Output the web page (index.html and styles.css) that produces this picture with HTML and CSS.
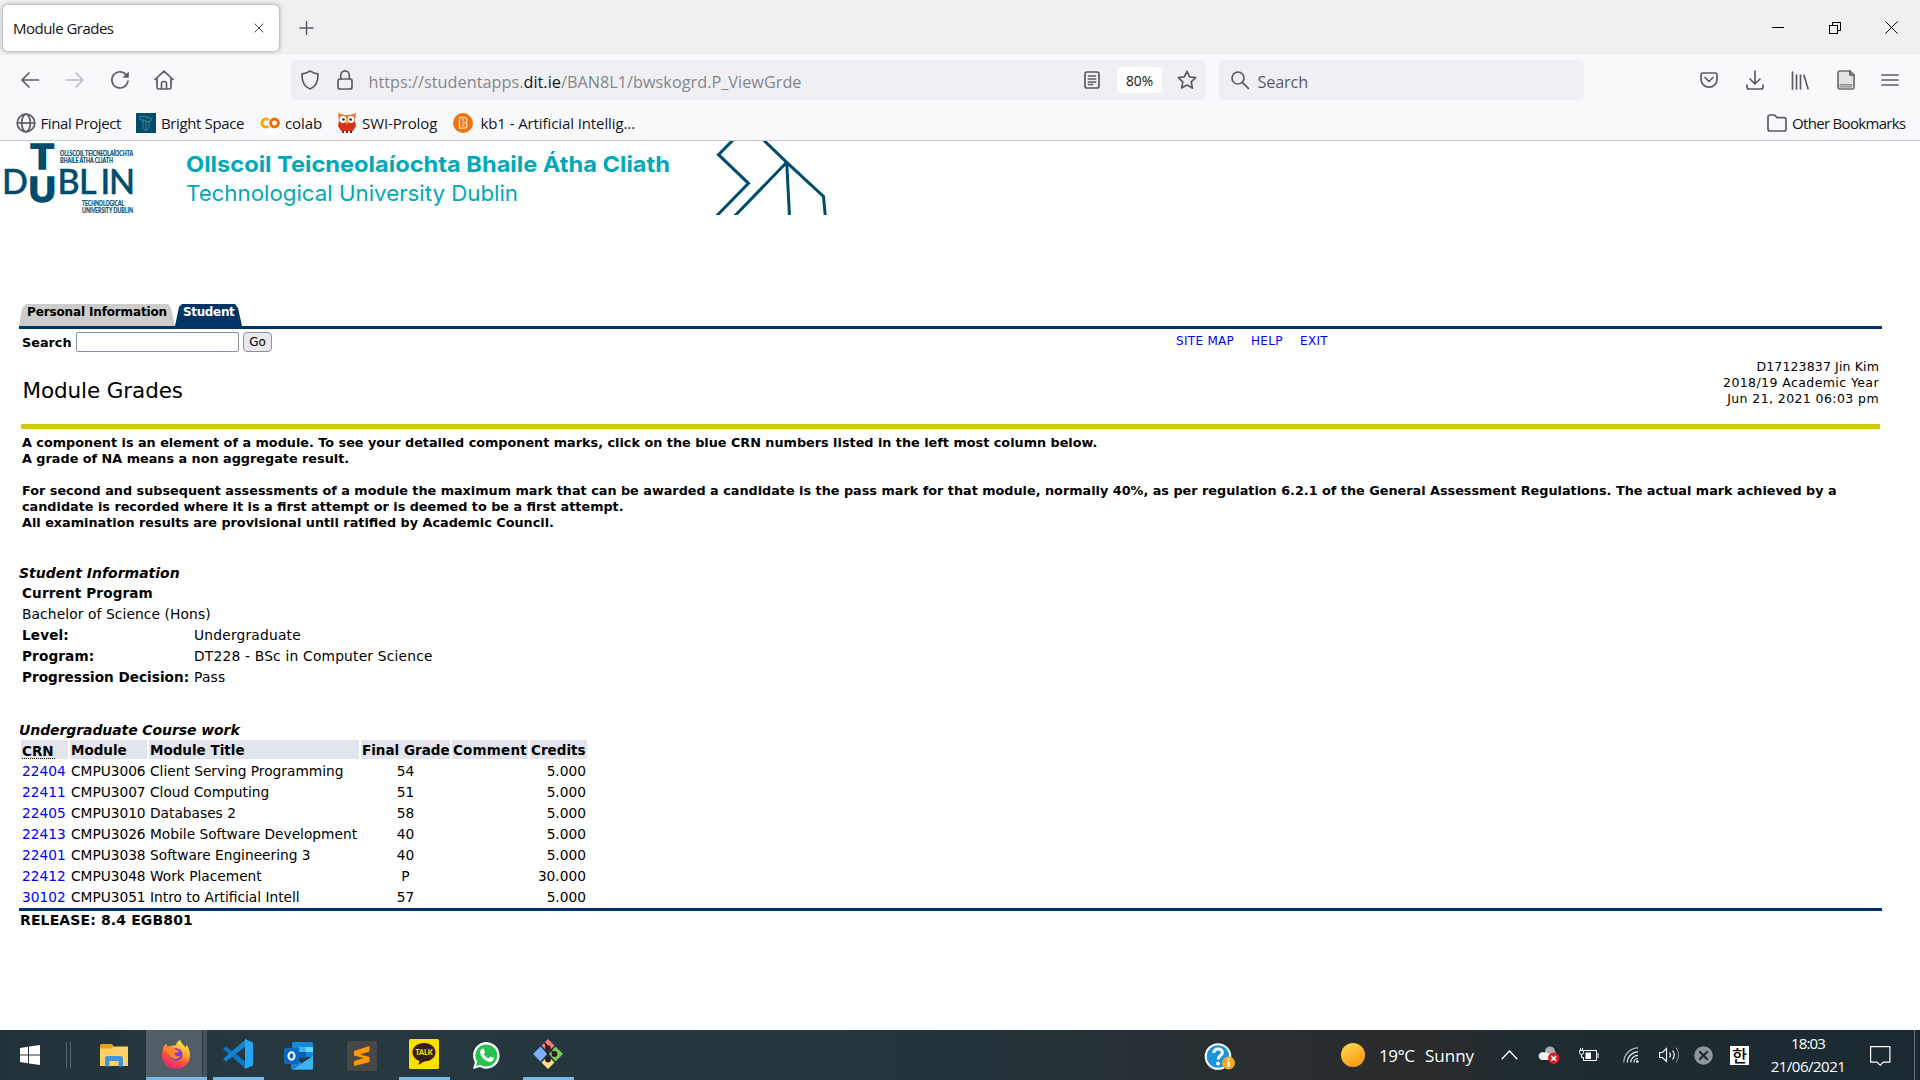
FILE: index.html
```html
<!DOCTYPE html>
<html lang="en">
<head>
<meta charset="utf-8">
<title>Module Grades</title>
<link rel="stylesheet" href="styles.css">
</head>
<body>
<div class="screen">
  <header class="tabstrip">
    <div class="tab"><span class="tab-title">Module Grades</span>
      <svg class="tab-close" viewBox="0 0 10 10"><path d="M.7.7l8.600 8.600M9.300.7L.7 9.300"/></svg></div>
    <svg class="new-tab" viewBox="0 0 14 14"><path d="M7 0v14M0 7h14"/></svg>
    <div class="window-buttons">
      <svg class="win-min" viewBox="0 0 12 12"><path d="M0 5.500h12"/></svg>
      <svg class="win-restore" viewBox="0 0 12 12"><path d="M.5 3.500h8v8h-8zM3.500 3.500v-3h8v8h-3"/></svg>
      <svg class="win-close" viewBox="0 0 13 13"><path d="M.5.500l12 12M12.500.500l-12 12"/></svg>
    </div>
  </header>

  <nav class="navbar">
    <svg class="nav-icon back" viewBox="0 0 18 16"><path d="M17.500 8H1M8 1L1 8l7 7"/></svg>
    <svg class="nav-icon forward" viewBox="0 0 18 16"><path d="M.5 8H17M10 1l7 7-7 7"/></svg>
    <svg class="nav-icon reload" viewBox="0 0 18 18"><path d="M15.800 4.500A8.100 8.100 0 1 0 17 10"/><path class="solid" d="M17.800.5v6.300h-6.300z"/></svg>
    <svg class="nav-icon home" viewBox="0 0 20 20"><path d="M1 9.500L10 1.200l9 8.300M3 8v9.500a1.500 1.500 0 0 0 1.500 1.500h11a1.500 1.500 0 0 0 1.500-1.500V8M7.500 19v-5.500a2 2 0 0 1 2-2h1a2 2 0 0 1 2 2V19"/></svg>
    <div class="urlbar">
      <svg class="shield" viewBox="0 0 18 20"><path d="M9 1c2.500 1.600 5 2.600 8 2.900C17.300 11 14.500 17 9 19 3.500 17 .7 11 1 3.900 4 3.600 6.500 2.600 9 1z"/></svg>
      <svg class="lock" viewBox="0 0 16 20"><rect x="1" y="9" width="14" height="10" rx="2"/><path d="M3.700 9V5.200a4.300 4.300 0 0 1 8.600 0V9"/></svg>
      <span class="url">https://studentapps.<b>dit.ie</b>/BAN8L1/bwskogrd.P_ViewGrde</span>
      <svg class="reader" viewBox="0 0 16 18"><rect x="1" y="1" width="14" height="16" rx="2"/><path d="M4.500 5h7M4.500 8h7M4.500 11h7M4.500 13.500h4"/></svg>
      <span class="zoom-level">80%</span>
      <svg class="star" viewBox="0 0 20 20"><path d="M10 1.300l2.600 5.600 6.100.8-4.500 4.200 1.200 6.200L10 15.100l-5.400 3 1.200-6.200L1.300 7.700l6.100-.8z"/></svg>
    </div>
    <div class="searchbar">
      <svg class="magnifier" viewBox="0 0 18 18"><circle cx="7" cy="7" r="6"/><path d="M11.300 11.300L17.300 17.300"/></svg>
      <span>Search</span>
    </div>
    <div class="toolbar-actions">
      <svg class="pocket" viewBox="0 0 18 16"><path d="M2.800 1h12.400A1.800 1.800 0 0 1 17 2.800V7.200a8 8 0 0 1-16 0V2.800A1.800 1.800 0 0 1 2.800 1zM5 5.500l4 4 4-4"/></svg>
      <svg class="download" viewBox="0 0 18 19"><path d="M9 0v13M4 8l5 5 5-5M1 14v2a2 2 0 0 0 2 2h12a2 2 0 0 0 2-2v-2"/></svg>
      <svg class="library" viewBox="0 0 18 19"><path d="M1.500 1v17M5.500 4v14M9.500 4v14M13 4.200l4 13.600"/></svg>
      <svg class="page" viewBox="0 0 18 20"><path class="sheet" d="M2.500 1H13l4 4v12.500A1.500 1.500 0 0 1 15.500 19h-13A1.500 1.500 0 0 1 1 17.500v-15A1.500 1.500 0 0 1 2.500 1z"/><path d="M13 1v4h4"/><path class="bar" d="M3.500 14.500h11v2.500h-11z"/></svg>
      <svg class="menu" viewBox="0 0 16 14"><path d="M0 2h16M0 7h16M0 12h16"/></svg>
    </div>
  </nav>

  <div class="bookmarks">
    <svg class="bm-icon" viewBox="0 0 20 20"><g class="globe"><circle cx="10" cy="10" r="8.800"/><ellipse cx="10" cy="10" rx="4.300" ry="8.800"/><path d="M1.500 10h17"/></g></svg>
    <span class="bm bm-final">Final Project</span>
    <svg class="bm-icon" viewBox="0 0 20 20"><path fill="#004c6c" d="M0 0h20v20H0z"/><path fill="none" stroke="#4b94a8" stroke-width=".8" d="M4 3.500h6l2 2M4 3.500v3l3 1v8l3 2v-9h3l3-2-3-2h-3M10 8.500l-3-2M13 8.500v6l-3 3"/></svg>
    <span class="bm bm-bright">Bright Space</span>
    <svg class="bm-icon" viewBox="0 0 20 20"><circle cx="10" cy="10" r="10" fill="#fff"/><path fill="none" stroke="#f9ab00" stroke-width="3" d="M8.500 7A4 4 0 1 0 8.500 13"/><circle cx="14.500" cy="10" r="3.900" fill="none" stroke="#e8710a" stroke-width="3"/></svg>
    <span class="bm bm-colab">colab</span>
    <svg class="bm-icon" viewBox="0 0 20 20"><path fill="#d6301f" d="M2 8h16l1 5-3 5H4l-3-5z"/><path fill="#e9772a" d="M1 0l6 2h6l6-2-1 9H2z"/><circle cx="6" cy="6.500" r="3.400" fill="#fff"/><circle cx="14" cy="6.500" r="3.400" fill="#fff"/><circle cx="6.500" cy="6.500" r="1.300" fill="#222"/><circle cx="13.500" cy="6.500" r="1.300" fill="#222"/><path fill="#f8c22c" d="M8.500 8h3L10 12z"/><path fill="#7b1610" d="M5 18h2v2H5zM9 18h2v2H9zM13 18h2v2h-2z"/></svg>
    <span class="bm bm-swi">SWI-Prolog</span>
    <svg class="bm-icon" viewBox="0 0 20 20"><circle cx="10" cy="10" r="10" fill="#ee7410"/><path fill="none" stroke="#fbd9b5" stroke-width="1.300" d="M6.500 4.500h4.800a2.600 2.600 0 0 1 1 5 2.900 2.900 0 0 1-1 5.600H6.500zM9 7h2M9 9.800h2.500M9 12.500h2.500"/></svg>
    <span class="bm bm-kb">kb1 - Artificial Intellig...</span>
    <svg class="bm-icon folder" viewBox="0 0 20 20"><path d="M3 2h4.500l2.500 2.700h7a2 2 0 0 1 2 2V16a2 2 0 0 1-2 2H3a2 2 0 0 1-2-2V4a2 2 0 0 1 2-2z"/></svg>
    <span class="bm bm-other">Other Bookmarks</span>
  </div>

  <main class="page-body">
    <svg class="banner" viewBox="0 0 840 74">
      <g class="logo">
        <text class="logo-heavy" x="30.500" y="27.500" textLength="23.500" lengthAdjust="spacingAndGlyphs">T</text>
        <text class="logo-heavy" x="28.500" y="60.500" textLength="27.500" lengthAdjust="spacingAndGlyphs">U</text>
        <text class="logo-letter" x="2" y="53">D</text>
        <text class="logo-letter" x="57.500 79 100.500 109" y="53">BLIN</text>
        <text class="logo-small" x="60" y="14.500" textLength="73" lengthAdjust="spacingAndGlyphs">OLLSCOIL TEICNEOLAÍOCHTA</text>
        <text class="logo-small" x="60" y="21.500" textLength="53" lengthAdjust="spacingAndGlyphs">BHAILE ÁTHA CLIATH</text>
        <text class="logo-small" x="82" y="65" textLength="42" lengthAdjust="spacingAndGlyphs">TECHNOLOGICAL</text>
        <text class="logo-small" x="82" y="71.700" textLength="51" lengthAdjust="spacingAndGlyphs">UNIVERSITY DUBLIN</text>
      </g>
      <text class="name-irish" x="186" y="31" textLength="484" lengthAdjust="spacingAndGlyphs">Ollscoil Teicneolaíochta Bhaile Átha Cliath</text>
      <text class="name-english" x="186" y="60" textLength="332" lengthAdjust="spacingAndGlyphs">Technological University Dublin</text>
      <path class="bridge" d="M733.500-1.500L718.500 13.700 748.500 42.300 716.500 75M763-1.500L786.700 21.300 823.500 55.500 825.300 75M786.700 21.300L734.700 75M786.700 21.300L789.500 75"/>
    </svg>

    <div class="portal">
      <div class="portal-tabs">
        <div class="ptab ptab-info">Personal Information</div>
        <div class="ptab ptab-student">Student</div>
      </div>
      <form class="search-row">
        <label for="q">Search</label>
        <input id="q" type="text">
        <button type="button">Go</button>
        <div class="site-links"><a class="site-map">SITE MAP</a><a class="help-link">HELP</a><a>EXIT</a></div>
      </form>
      <div class="title-row">
        <h1>Module Grades</h1>
        <div class="user-info"><div class="user-name">D17123837 Jin Kim</div><div>2018/19 Academic Year</div><div>Jun 21, 2021 06:03 pm</div></div>
      </div>
      <div class="notice">
        <span>A component is an element of a module. To see your detailed component marks, click on the blue CRN numbers listed in the left most column below.</span><br>
        <span>A grade of NA means a non aggregate result.</span><br><br>
        <span>For second and subsequent assessments of a module the maximum mark that can be awarded a candidate is the pass mark for that module, normally 40%, as per regulation 6.2.1 of the General Assessment Regulations. The actual mark achieved by a</span><br>
        <span>candidate is recorded where it is a first attempt or is deemed to be a first attempt.</span><br>
        <span>All examination results are provisional until ratified by Academic Council.</span>
      </div>
      <h2 class="caption">Student Information</h2>
      <div class="info">
        <div class="info-row"><b>Current Program</b></div>
        <div class="info-row"><span class="degree">Bachelor of Science (Hons)</span></div>
        <div class="info-row"><b>Level:</b><span>Undergraduate</span></div>
        <div class="info-row"><b>Program:</b><span>DT228 - BSc in Computer Science</span></div>
        <div class="info-row"><b class="decision">Progression Decision:</b><span>Pass</span></div>
      </div>
      <h2 class="caption caption-work">Undergraduate Course work</h2>
      <table class="grades">
        <colgroup><col class="c-crn"><col class="c-module"><col class="c-title"><col class="c-grade"><col class="c-comment"><col class="c-credits"></colgroup>
        <tr><th><abbr>CRN</abbr></th><th>Module</th><th>Module Title</th><th>Final Grade</th><th class="th-comment">Comment</th><th>Credits</th></tr>
        <tr><td><a>22404</a></td><td>CMPU3006</td><td>Client Serving Programming</td><td>54</td><td></td><td>5.000</td></tr>
        <tr><td><a>22411</a></td><td>CMPU3007</td><td>Cloud Computing</td><td>51</td><td></td><td>5.000</td></tr>
        <tr><td><a>22405</a></td><td>CMPU3010</td><td>Databases 2</td><td>58</td><td></td><td>5.000</td></tr>
        <tr><td><a>22413</a></td><td>CMPU3026</td><td>Mobile Software Development</td><td>40</td><td></td><td>5.000</td></tr>
        <tr><td><a>22401</a></td><td>CMPU3038</td><td>Software Engineering 3</td><td>40</td><td></td><td>5.000</td></tr>
        <tr><td><a>22412</a></td><td>CMPU3048</td><td>Work Placement</td><td>P</td><td></td><td>30.000</td></tr>
        <tr><td><a>30102</a></td><td>CMPU3051</td><td>Intro to Artificial Intell</td><td>57</td><td></td><td>5.000</td></tr>
      </table>
      <div class="release">RELEASE: 8.4 EGB801</div>
    </div>
  </main>

  <footer class="taskbar">
    <div class="task start"><svg width="20" height="20" viewBox="0 0 20 20"><path fill="#fff" d="M0 3l8-1.200v7.700H0zM9 1.600L20 0v9.500H9zM0 10.500h8v7.700L0 17zM9 10.500h11V20L9 18.400z"/></svg></div>
    <i class="divider"></i>
    <div class="task explorer"><svg width="28" height="24" viewBox="0 0 28 24"><path fill="#e3a21a" d="M0 1.500A1.500 1.500 0 0 1 1.500 0H12l1.500 2-2 3H0z"/><path fill="#fdd165" d="M0 4.500h11l2-2h15V22H0z"/><path fill="#3f96dd" d="M5 22.500v-8A2.500 2.500 0 0 1 7.500 12h13a2.500 2.500 0 0 1 2.500 2.500v8h-4.500V17h-9v5.500z"/></svg></div>
    <div class="task firefox"><svg width="28" height="29" viewBox="0 0 28 29"><defs><linearGradient id="fx" x1=".8" y1="0" x2=".3" y2="1"><stop offset="0" stop-color="#fff44f"/><stop offset=".35" stop-color="#ffb02e"/><stop offset=".65" stop-color="#ff5140"/><stop offset="1" stop-color="#e0237d"/></linearGradient></defs><path fill="url(#fx)" d="M14 5c.5-2.500 2-4.300 4.500-5 .3 3.500 3.300 4.500 4.800 7.500l1-2.500C27 8 28 11.500 28 15.500a14 13.300 0 0 1-28 0C0 11 1.200 8 2 5.500L5 4v3.500C7 6 10 5.500 14 5z"/><path fill="#7a3be0" d="M9 10c3-2.500 8-2.500 10.500 1 2 4 .5 9-4.500 9.500-5 .3-7.500-3-7.500-6z"/><path fill="#ff8a2e" d="M2.500 8c3.500-2.500 8-2 11 1.500l4 1.500c-1 1.700-3 1.500-5 2.500.5 2.500 3 3.500 6 2.200-2 4-8 4.500-10.500.3C6.500 13 5 12 2.500 8z"/></svg></div>
    <div class="task vscode"><svg width="30" height="30" viewBox="0 0 30 30"><path fill="#0b76c5" d="M0 10l3-2.500L23 23v7z"/><path fill="#1184d4" d="M0 20l3 2.500L23 7V0z"/><path fill="#2aa5f2" d="M22 0l8 3.500v23L22 30z"/></svg></div>
    <div class="task outlook"><svg width="29" height="28" viewBox="0 0 29 28"><path fill="#1488dc" d="M8 1.500A1.500 1.500 0 0 1 9.500 0h18A1.500 1.500 0 0 1 29 1.500V15H8z"/><path fill="#35b8f1" d="M15 5h7v5h-7z"/><path fill="#62dcfa" d="M22 5h7v5h-7z"/><path fill="#0a62ad" d="M15 10h7v6h-7z"/><path fill="#1b7fd2" d="M7 14l11 7 11-7v12a1.500 1.500 0 0 1-1.500 1.500h-19A1.500 1.500 0 0 1 7 26z"/><path fill="#3eb4ec" d="M29 14v12a1.500 1.500 0 0 1-1.500 1.500H9z"/><rect y="6" width="15" height="16" rx="1.500" fill="#0a66c0"/><ellipse cx="7.500" cy="14" rx="3" ry="3.700" fill="none" stroke="#fff" stroke-width="2"/></svg></div>
    <div class="task sublime"><svg width="30" height="30" viewBox="0 0 30 30"><rect width="30" height="30" rx="2" fill="#484747"/><path fill="#ff9800" d="M7 10l15.500-5v5.500L13 13.500l9.500 2.500v5L7 25v-5l9.500-3L7 14.500z"/></svg></div>
    <div class="task kakao"><svg width="30" height="30" viewBox="0 0 30 30"><rect width="30" height="30" rx="1.500" fill="#fae100"/><path fill="#371d1e" d="M15 4c6.500 0 11.500 4 11.500 9.300S21.500 22.500 15 22.500L9.500 26l.8-4.200C6.300 20.500 3.500 17.300 3.500 13.300 3.500 8 8.500 4 15 4z"/><text class="talk" x="6.300" y="16.300" textLength="17.400" lengthAdjust="spacingAndGlyphs">TALK</text></svg></div>
    <div class="task whatsapp"><svg width="27" height="27" viewBox="0 0 27 27"><path fill="#fff" d="M0 27l1.900-6.800A13.300 13.300 0 1 1 7 25.100z"/><path fill="#27c24c" d="M3 24l1.200-4.300a11 11 0 1 1 3.200 3.100z"/><path fill="#fff" d="M8.500 7c1-1 2-.7 2.400.2l1 2.500c.2.700-.4 1.200-1.200 2.200 1.200 2.200 2.900 3.600 5 4.500l1.700-2c1.300.3 2.500 1 3.500 1.700 0 3.500-3.200 4.300-5.200 3.600C12 18.500 8.500 15.500 7.200 11.500c-.5-1.700.2-3.500 1.300-4.500z"/></svg></div>
    <div class="task git"><svg width="30" height="30" viewBox="0 0 30 30"><path fill="#f87c7c" d="M15 0l6.500 6.500L15 13 8.500 6.500z"/><path fill="#7fb0fb" d="M7.500 7.500L14 15l-6.500 7.500L0 15z"/><path fill="#7cc95c" d="M22.500 7.500L30 15l-7.500 7.500L16 15z"/><path fill="#ffe27f" d="M15 17l6.500 6.500L15 30l-6.500-6.500z"/><g class="git-graph"><path d="M11.500 3.500l3.500 5V20M15.500 9l6 6"/><circle cx="15" cy="9" r="2"/><circle cx="15" cy="20.500" r="2.200"/><circle cx="21.500" cy="15" r="2.200"/></g></svg></div>

    <svg class="help" width="30" height="28" viewBox="0 0 30 28"><circle cx="13" cy="13.500" r="13.300" fill="#fff"/><circle cx="13" cy="13.500" r="11.200" fill="#1a94e0"/><path fill="none" stroke="#fff" stroke-width="3" d="M8.800 10c0-5.500 8.800-5.200 8.600-.3-.2 3-4.300 3-4.300 6.800"/><circle cx="13" cy="20.500" r="1.900" fill="#fff"/><circle cx="23.500" cy="20" r="6.500" fill="#f0ab22"/><path fill="#fff" d="M22.600 18.800h2v5.200h-2zM22.600 15.500h2v2h-2z"/></svg>
    <svg class="sun" width="24" height="24" viewBox="0 0 24 24"><defs><linearGradient id="sun" x1="0" y1="0" x2=".6" y2="1"><stop offset="0" stop-color="#ffdc5a"/><stop offset="1" stop-color="#ff9a10"/></linearGradient></defs><circle cx="12" cy="12" r="12" fill="url(#sun)"/></svg>
    <span class="temp">19°C</span><span class="weather">Sunny</span>
    <svg class="chevron" width="17" height="10" viewBox="0 0 17 10"><path d="M.7 9.300L8.500 1l7.800 8.300"/></svg>
    <svg class="cloud" width="21" height="17" viewBox="0 0 21 17"><path fill="#a9adaf" d="M6 5a5 5 0 0 1 10-1l2 4-3 5H7z"/><path fill="#f2f2f2" d="M4 13a4 4 0 1 1 1.500-7.500C8 4.500 10 6 11 8l4 5z"/><circle cx="14.700" cy="11.300" r="5.700" fill="#d8202a"/><path stroke="#fff" stroke-width="1.600" d="M12.300 9l4.800 4.800M17.100 9l-4.800 4.800"/></svg>
    <svg class="battery" width="20" height="14" viewBox="0 0 20 14"><path fill="none" stroke="#fff" d="M5 2.500h12.500v10H4.500V9M.5 2.500h4v2a2 2 0 0 1-4 0zM1.500 2.500V0M3.500 2.500V0M2.500 6.500v3h2M19 5v5"/><path fill="#fff" d="M6.500 4.500h5.500v6.500H6.500z"/></svg>
    <svg class="wifi" width="16" height="16" viewBox="0 0 16 16"><g fill="none" stroke="#e8ecee" stroke-width="1.200"><path d="M.8 15.500A14.500 14.500 0 0 1 15 .9" opacity=".75"/><path d="M4.300 15.500A10.800 10.800 0 0 1 15 4.800M7.800 15.500A7.200 7.200 0 0 1 15 8.300M11 15.500a4 4 0 0 1 4-4"/></g><circle cx="14.300" cy="14.500" r="1.300" fill="#fff"/></svg>
    <svg class="volume" width="21" height="18" viewBox="0 0 21 18"><path fill="none" stroke="#fff" stroke-width="1.100" d="M.6 6.500h2.800L7.500 2.500v13l-4.100-4H.6zM10.500 6.500q2 2.500 0 5M13.500 4.500q3.500 4.500 0 9"/><path fill="none" stroke="#7e898e" d="M17 1.500q5 7.500 0 15"/></svg>
    <svg class="blocked" width="19" height="19" viewBox="0 0 19 19"><circle cx="9.500" cy="9.500" r="9.300" fill="#8f9699"/><path stroke="#1d2a30" stroke-width="2.200" d="M5.200 5.200l8.600 8.600M13.800 5.200l-8.600 8.600"/></svg>
    <span class="ime">한</span>
    <div class="clock"><span class="time">18:03</span><span class="date">21/06/2021</span></div>
    <svg class="notify" width="21" height="20" viewBox="0 0 21 20"><path fill="none" stroke="#fff" stroke-width="1.200" d="M.6.600h19.300v15.500h-6.400l-3.300 3-3.300-3H.6z"/></svg>
    <i class="peek"></i>
  </footer>
</div>
</body>
</html>
```
FILE: styles.css
```css
* { box-sizing: border-box; }
html, body { margin: 0; height: 100%; overflow: hidden; }
body { background: #fff; color: #000; font-family: "DejaVu Sans", sans-serif; }
svg { display: block; flex: none; overflow: visible; }
span, a, b, label { white-space: nowrap; }

.screen { width: 1920px; height: 1080px; display: flex; flex-direction: column; }

/* Browser chrome */
.tabstrip, .navbar, .bookmarks { display: flex; align-items: center; font-family: "Open Sans", "Noto Sans", sans-serif; flex: none; }
.tabstrip { height: 55px; background: #f0f0f0; }
.tabstrip svg, .navbar svg { fill: none; stroke: #5b5b66; }
.tab { width: 276px; height: 46px; margin-left: 3px; padding: 0 15px 0 10px; display: flex; align-items: center; justify-content: space-between; background: #fff; border-radius: 5px; box-shadow: 0 0 4px rgba(80, 80, 110, .65); font-size: 15px; letter-spacing: -.51px; color: #15141a; }
.tab .tab-close { width: 10px; height: 10px; stroke: #444; }
.new-tab { width: 15px; height: 14px; margin-left: 20px; stroke-width: 1.500; }
.window-buttons { margin-left: auto; display: flex; align-items: center; gap: 45px; padding-right: 22px; }
.window-buttons svg { width: 12px; height: 12px; stroke: #000; shape-rendering: crispEdges; }
.window-buttons .win-close { width: 13px; height: 13px; shape-rendering: auto; }
.window-buttons .win-restore { margin-right: -1px; }

.navbar { height: 50px; background: #f9f9fb; }
.navbar svg { stroke-width: 1.700; stroke-linejoin: round; stroke-linecap: round; }
.nav-icon { width: 18px; height: 16px; }
.back { margin-left: 21px; }
.navbar .forward { margin-left: 27px; stroke: #bcbcc2; }
.reload { height: 18px; margin-left: 27px; }
.reload .solid { fill: #5b5b66; stroke: none; }
.home { width: 20px; height: 20px; margin-left: 25px; }
.urlbar, .searchbar { height: 40px; display: flex; align-items: center; background: #f0f0f4; border-radius: 5px; }
.urlbar { width: 915px; margin-left: 117px; padding: 0 9px 0 10px; }
.shield { width: 18px; height: 20px; }
.lock { width: 16px; height: 20px; margin-left: 18px; }
.url { margin-left: 15.500px; padding-top: 3px; font-size: 16.250px; letter-spacing: .015px; color: #85858c; }
.url b { font-weight: 400; color: #15141a; }
.reader { width: 16px; height: 18px; margin-left: auto; }
.zoom-level { width: 45px; height: 26px; margin: 0 15px 0 17px; display: grid; place-items: center; background: #fff; border-radius: 4px; font-size: 13.750px; color: #15141a; }
.star { width: 20px; height: 20px; }
.searchbar { width: 365px; margin-left: 13px; padding-left: 12px; font-size: 16.250px; letter-spacing: -.16px; color: #5b5b66; }
.magnifier { width: 18px; height: 18px; margin-right: 8.500px; }
.searchbar span { padding-top: 3px; }
.toolbar-actions { margin-left: auto; margin-right: 22px; display: flex; align-items: center; gap: 27.500px; }
.pocket { width: 18px; height: 16px; }
.download { width: 18px; height: 19px; }
.library { width: 18px; height: 19px; }
.page { width: 18px; height: 20px; }
.page .sheet { fill: #e3e3e3; stroke: #6f6f6f; }
.page .bar { fill: #bbb; stroke: #888; stroke-width: 1; }
.menu { width: 16px; height: 14px; }

.bookmarks { height: 36px; padding-left: 15.500px; background: #f9f9fb; border-bottom: 1px solid #c9c9cd; font-size: 15px; color: #15141a; }
.bm-icon { width: 20px; height: 20px; }
.globe, .folder { fill: none; stroke: #5b5b66; stroke-width: 1.700; }
.bm { margin-left: 5px; letter-spacing: -.1px; }
.bm-final { width: 95.500px; letter-spacing: -.4px; }
.bm-bright { width: 99px; letter-spacing: -.38px; }
.bm-colab { width: 52px; }
.bm-swi { width: 91px; }
.bm-kb { margin-left: 7.500px; }
.folder { margin-left: auto; }
.bm-other { margin-right: 14.500px; letter-spacing: -.68px; }

/* Web page */
.page-body { flex: 1; background: #fff; overflow: hidden; }
.banner { width: 840px; height: 74px; overflow: hidden; }
.logo text { fill: #004c6c; stroke: #004c6c; font-family: Lato, sans-serif; }
.logo .logo-heavy { font-size: 35px; font-weight: 900; stroke-width: 1.500; }
.logo .logo-letter { font-size: 34px; font-weight: 500; stroke-width: .5; }
.logo .logo-small { font-size: 7px; font-weight: 700; stroke-width: .2; }
.name-irish, .name-english { fill: #00a9b7; font-family: Inter, sans-serif; font-size: 22px; }
.name-irish { font-weight: 700; }
.bridge { fill: none; stroke: #004c6c; stroke-width: 3; }

.portal { padding: 89px 38px 0 19px; }
.portal-tabs { display: flex; height: 25px; border-bottom: 3px solid #003366; font-size: 12px; font-weight: 700; letter-spacing: -.14px; white-space: nowrap; }
.ptab { height: 22px; line-height: 16px; }
.ptab-info { width: 156px; padding-left: 8px; background: #ccc; clip-path: polygon(0 100%, 3px 4px, 7px 0, 149px 0, 152px 4px, 100% 100%); }
.ptab-student { width: 67px; padding-left: 8px; background: #003366; color: #fff; clip-path: polygon(0 100%, 4px 3px, 7px 0, 60px 0, 63px 4px, 100% 100%); letter-spacing: -.35px; }

.search-row { height: 26px; padding-left: 3px; display: flex; align-items: center; font-size: 12.800px; }
.search-row label { width: 54px; font-weight: 700; }
.search-row input { width: 163px; height: 20px; margin: 0 4px 0 0; border: 1px solid #8f8f9d; border-radius: 2px; }
.search-row button { width: 29px; height: 20px; padding: 0; border: 1px solid #8f8f9d; border-radius: 4px; background: #e9e9ed; font: 12px/18px "DejaVu Sans", sans-serif; color: #000; }
.site-links { margin-left: 904px; padding-bottom: 2px; display: flex; font-size: 12px; letter-spacing: .3px; color: #00f; }
.site-map { width: 75px; }
.help-link { width: 49px; }

.title-row { height: 74px; margin: 0 2px; padding: 4px 1px 0 1.500px; display: flex; justify-content: space-between; border-bottom: 5px solid #cc0; }
h1 { margin: 19px 0 0; font-size: 21.500px; font-weight: 400; line-height: 26px; letter-spacing: -.1px; }
.user-info { font-size: 12.500px; line-height: 16px; text-align: right; letter-spacing: .41px; }
.user-name { letter-spacing: .14px; }

.notice { margin-left: 3px; padding-top: 6px; font-size: 12.800px; line-height: 16px; font-weight: 700; height: 136px; }
.caption { margin: 0; font-size: 14px; line-height: 17px; font-weight: 700; font-style: italic; }
.caption-work { letter-spacing: -.09px; }
.info { margin: 1px 0 34px 3px; font-size: 13.800px; }
.info-row { display: flex; height: 21px; line-height: 21px; letter-spacing: .2px; }
.info-row b { width: 172px; font-size: 13.600px; letter-spacing: .13px; }
.info-row .decision { letter-spacing: .02px; }
.info-row .degree { letter-spacing: .1px; }

.grades { width: 570px; margin-top: -1px; table-layout: fixed; border-spacing: 2px; font-size: 13.750px; line-height: 17px; }
.grades th, .grades td { height: 19px; padding: 2px 1px 0; white-space: nowrap; text-align: left; }
.grades th { background: #e3e5ee; font-size: 13.500px; font-weight: 700; }
.grades .th-comment { letter-spacing: .2px; }
.grades abbr { border-bottom: 1px dotted #000; display: block; width: 33px; height: 16px; }
.grades td:nth-child(2) { letter-spacing: -.03px; }
.grades td:nth-child(4) { text-align: center; }
.grades td:nth-child(6) { text-align: right; }
.grades a { color: #00f; }
.c-crn { width: 47px; }
.c-module { width: 77px; }
.c-title { width: 210px; }
.c-grade { width: 89px; }
.c-comment { width: 76px; }
.c-credits { width: 57px; }
.release { border-top: 3px solid #003366; padding: 1px; font-size: 14px; line-height: 17px; font-weight: 700; letter-spacing: .13px; }

/* Taskbar */
.taskbar { height: 50px; flex: none; display: flex; align-items: center; background: linear-gradient(90deg, #22323a 0, #263840 300px, #24343b 950px, #2b2b2c 1420px, #1f2b31 1520px, #1b2a31 1920px); color: #fff; font-family: "Open Sans", "Noto Sans", sans-serif; font-size: 17px; }
.task { height: 50px; display: grid; place-items: center; }
.start { width: 60px; }
.divider { width: 5px; height: 26px; margin: 0 13px 0 6px; border: solid #56636a; border-width: 0 1px; }
.explorer { width: 60px; }
.firefox { width: 61px; padding-right: 1px; margin-left: 2px; border-bottom: 3px solid #76b9ed; background: linear-gradient(90deg, #525e65 56px, #2c3a41 56px, #2c3a41 57px, #46535a 57px); }
.vscode { width: 51px; margin-left: 6px; padding-right: 1px; border-bottom: 3px solid #76b9ed; }
.outlook { width: 60px; margin-left: 5px; padding-right: 1px; }
.sublime { width: 60px; margin-left: 3px; }
.kakao, .git { width: 51px; border-bottom: 3px solid #76b9ed; }
.kakao { margin-left: 7px; padding-right: 1px; }
.whatsapp { width: 60px; margin-left: 6px; }
.git { margin-left: 7px; padding-right: 1px; }
.task svg { margin-top: 1px; }
.start svg { margin-top: 0; }
.talk { fill: #fae100; font: 900 8px Lato, sans-serif; }
.git-graph { fill: #2b1f1f; stroke: #2b1f1f; stroke-width: 1.400; }
.help { margin-left: 631px; margin-top: 3px; }
.sun { margin-left: 106px; }
.temp { width: 46px; margin-left: 14px; letter-spacing: -.48px; }
.weather { width: 76px; }
.chevron path { fill: none; stroke: #fff; stroke-width: 1.300; }
.cloud { margin-left: 21px; }
.battery { margin-left: 19px; }
.wifi { margin-left: 24px; }
.volume { margin-left: 20px; }
.blocked { margin-left: 14px; }
.ime { width: 19px; height: 19px; margin-left: 17px; background: #fff; color: #000; font: 500 16px/18px "Noto Sans CJK KR", sans-serif; text-align: center; }
.clock { width: 118px; margin-right: 3px; display: flex; flex-direction: column; align-items: center; font-size: 15px; line-height: 23px; }
.time { letter-spacing: -.8px; }
.date { letter-spacing: -.5px; }
.notify { margin-top: 2px; }
.peek { width: 1px; height: 50px; margin-left: auto; margin-right: 5px; background: #6c777c; }
```
